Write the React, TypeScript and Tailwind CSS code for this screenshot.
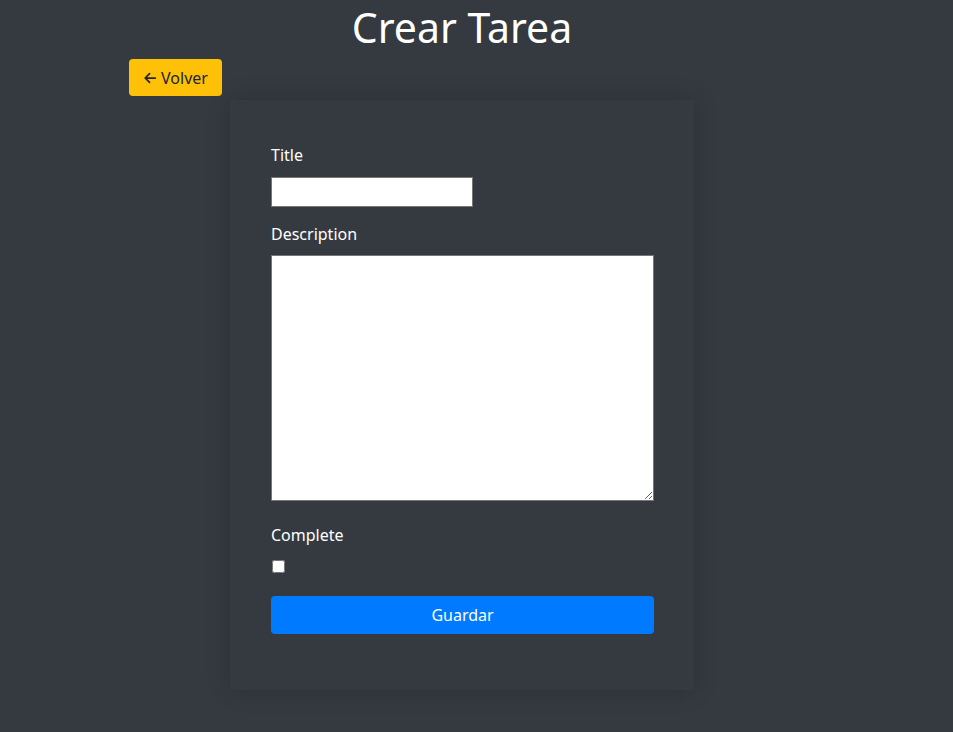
import React from 'react';

export default function App() {
  return (
    <div className="min-h-screen w-full bg-[#343a40] pb-10 text-white" style={{ fontFamily: '"Noto Sans", "Open Sans", sans-serif' }}>
      <h1 className="pr-[29px] pt-[4px] text-center text-[41px] leading-[46px] font-normal text-white">Crear Tarea</h1>
      <div className="ml-[129px] mt-[9px]">
        <button className="flex h-[37px] w-[93px] items-center justify-center gap-1 rounded bg-[#ffc107] text-[16px] text-[#212529]">
          <svg width="14" height="14" viewBox="0 0 16 16" fill="none" stroke="#212529" strokeWidth="2" strokeLinecap="round" strokeLinejoin="round">
            <path d="M14 8H2.5M7.5 3L2.5 8l5 5" />
          </svg>
          Volver
        </button>
      </div>
      <div className="ml-[230px] mt-[4px] w-[464px] bg-[#353a41] px-[41px] pt-[43px] pb-[56px] shadow-[0_0_22px_rgba(0,0,0,0.18)]">
        <form className="flex flex-col">
          <label className="text-[16px] leading-[24px] text-white">Title</label>
          <input type="text" className="mt-[10px] h-[30px] w-[202px] border border-[#767676] bg-white text-black" />
          <label className="mt-[15px] text-[16px] leading-[24px] text-white">Description</label>
          <textarea className="mt-[9px] h-[246px] w-[383px] border border-[#767676] bg-white text-black" />
          <label className="mt-[22px] text-[16px] leading-[24px] text-white">Complete</label>
          <div className="mt-[13px] flex">
            <input type="checkbox" className="ml-[1px] h-[13px] w-[13px]" />
          </div>
          <button type="button" className="mt-[23px] h-[38px] w-[383px] rounded bg-[#007bff] text-[16px] text-white">Guardar</button>
        </form>
      </div>
    </div>
  );
}
